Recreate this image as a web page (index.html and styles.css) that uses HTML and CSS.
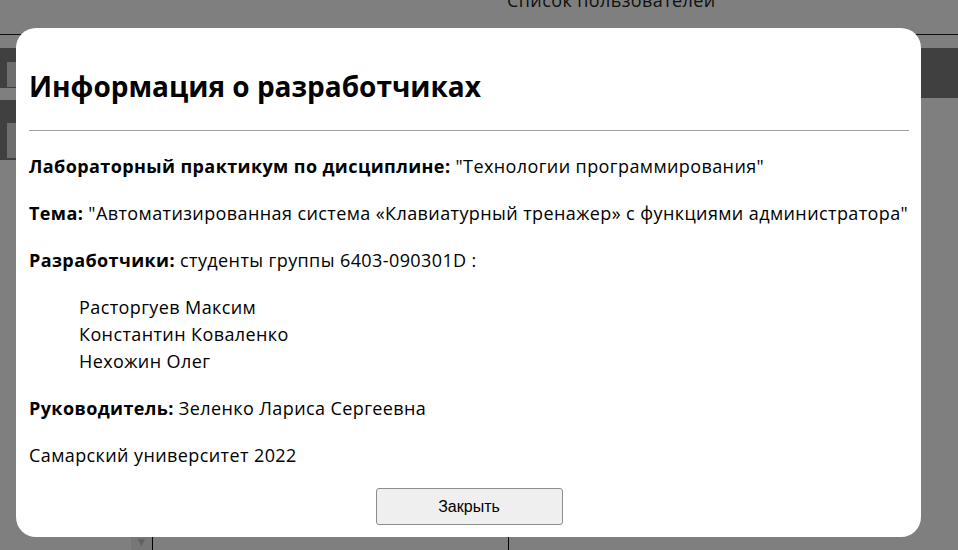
FILE: index.html
```html
<!DOCTYPE html>
<html lang="ru">
<head>
<meta charset="utf-8">
<title>Информация о разработчиках</title>
<link rel="stylesheet" href="styles.css">
</head>
<body>
<div class="app">
  <header class="app-header">
    <span class="app-header-title">Список пользователей</span>
  </header>
  <div class="app-body">
    <aside class="app-side">
      <div class="side-tool"><span class="side-tool-btn"></span></div>
      <div class="side-tool side-tool-tall"><span class="side-tool-btn side-tool-btn-tall"></span></div>
    </aside>
    <div class="app-toolbar-wrap">
      <div class="app-toolbar"></div>
    </div>
  </div>
  <div class="app-table">
    <div class="table-col table-col-first">
      <span class="table-scroll">▼</span>
    </div>
    <div class="table-col table-col-mid"></div>
    <div class="table-col table-col-last"></div>
  </div>
</div>

<div class="overlay">
  <div class="modal">
    <h2 class="modal-title">Информация о разработчиках</h2>
    <hr class="modal-rule">
    <p class="modal-line"><b>Лабораторный практикум по дисциплине:</b> "Технологии программирования"</p>
    <p class="modal-line"><b>Тема:</b> "Автоматизированная система «Клавиатурный тренажер» с функциями администратора"</p>
    <p class="modal-line"><b>Разработчики:</b> студенты группы 6403-090301D :</p>
    <div class="dev-list">
      <div>Расторгуев Максим</div>
      <div>Константин Коваленко</div>
      <div>Нехожин Олег</div>
    </div>
    <p class="modal-line"><b>Руководитель:</b> Зеленко Лариса Сергеевна</p>
    <p class="modal-line">Самарский университет 2022</p>
    <div class="modal-actions">
      <button class="modal-button" type="button">Закрыть</button>
    </div>
  </div>
</div>
</body>
</html>
```

FILE: styles.css
```css
* {
  box-sizing: border-box;
}

html, body {
  margin: 0;
  padding: 0;
  height: 100%;
  overflow: hidden;
}

body {
  font-family: "Open Sans", "Noto Sans", sans-serif;
  background: #ffffff;
  color: #000;
}

/* ---------- background application ---------- */
.app {
  height: 100vh;
  display: flex;
  flex-direction: column;
  overflow: hidden;
}

.app-header {
  height: 35px;
  border-bottom: 1px solid #1c1c1c;
  padding-left: 507px;
  flex: none;
}

.app-header-title {
  display: block;
  margin-top: -13px;
  font-size: 18px;
  line-height: 27px;
  letter-spacing: 0.4px;
  color: #222;
}

.app-body {
  display: flex;
  margin-top: 13px;
  flex: none;
  height: 122px;
}

.app-side {
  width: 150px;
  display: flex;
  flex-direction: column;
  gap: 12px;
}

.side-tool {
  height: 40px;
  background: #808080;
  padding: 14px 0 0 7px;
}

.side-tool-tall {
  height: 60px;
  padding-top: 23px;
}

.side-tool-btn {
  display: block;
  width: 120px;
  height: 25px;
  background: #dcdcdc;
}

.side-tool-btn-tall {
  height: 35px;
}

.app-toolbar-wrap {
  flex: 1;
  display: flex;
  justify-content: flex-end;
}

.app-toolbar {
  width: 200px;
  height: 50px;
  background: #808080;
}

.app-table {
  flex: 1;
  display: grid;
  grid-template-columns: 152px 356px 1fr;
}

.table-col {
  display: flex;
  align-items: flex-end;
}

.table-col-first {
  justify-content: flex-end;
}

.table-col-mid,
.table-col-last {
  border-left: 1px solid #000;
}

.table-scroll {
  width: 21px;
  height: 13px;
  background: #eeeeee;
  color: #c0c0c0;
  font-family: "DejaVu Sans", sans-serif;
  font-size: 9px;
  line-height: 10px;
  text-align: center;
}

/* ---------- overlay & modal ---------- */
.overlay {
  position: fixed;
  inset: 0;
  background: rgba(0, 0, 0, 0.5);
  padding: 28px 0 0 16px;
}

.modal {
  width: 905px;
  height: 509px;
  background: #ffffff;
  border-radius: 20px;
  padding: 40px 12px 12px 13px;
  display: flex;
  flex-direction: column;
}

.modal-title {
  margin: 0;
  font-size: 28px;
  line-height: 36px;
  font-weight: 700;
  color: #000;
}

.modal-rule {
  margin: 26px 0 22px;
  border: 0;
  border-top: 1px solid #a0a0a0;
  height: 0;
  width: 100%;
}

.modal-line {
  margin: 0 0 20px;
  font-size: 18px;
  line-height: 27px;
  letter-spacing: 0.4px;
  white-space: nowrap;
}

.modal-line b {
  font-weight: 700;
}

.dev-list {
  margin: 0 0 20px 50px;
  font-size: 18px;
  line-height: 27px;
  letter-spacing: 0.4px;
}

.modal-actions {
  display: flex;
  justify-content: center;
  margin-top: -1px;
}

.modal-button {
  width: 187px;
  height: 37px;
  background: #efefef;
  border: 1px solid #8d8d8d;
  border-radius: 3px;
  font-family: "Liberation Sans", Arial, sans-serif;
  font-size: 16px;
  color: #000;
  padding: 0;
}
```
